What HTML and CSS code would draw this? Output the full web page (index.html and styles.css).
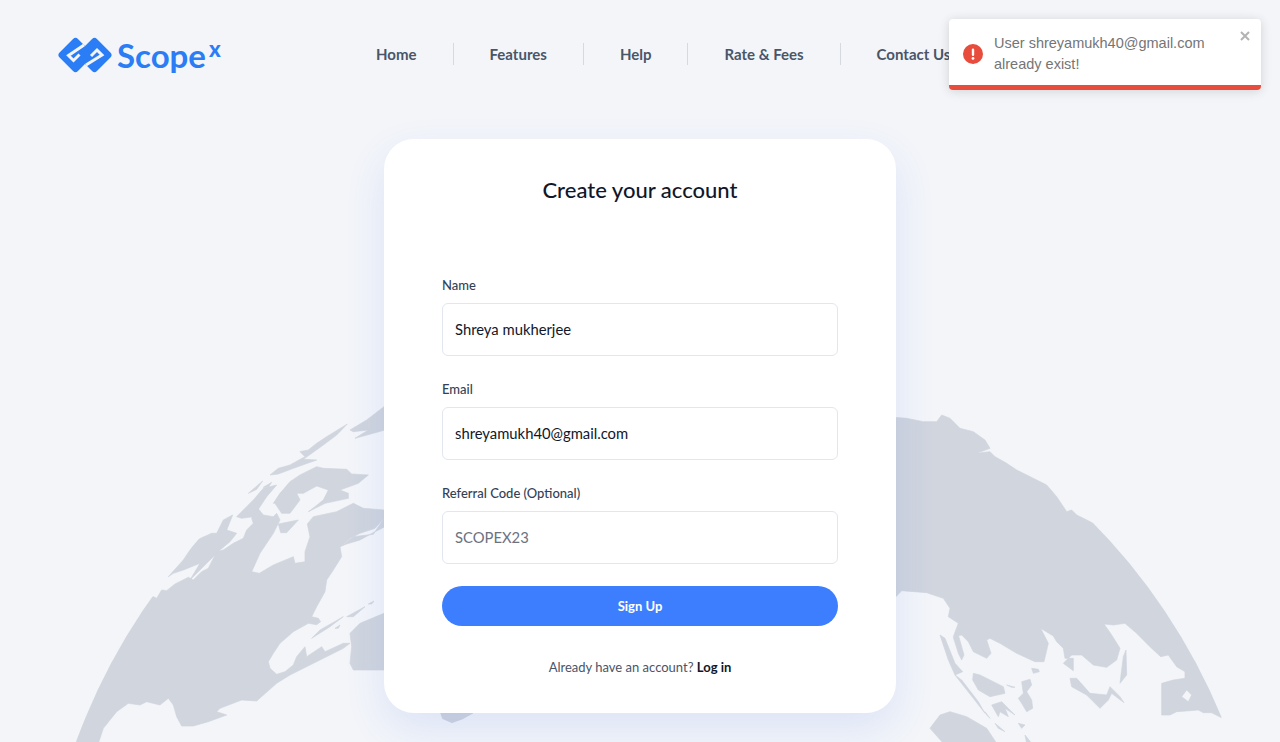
FILE: index.html
```html
<!DOCTYPE html>
<html lang="en">

<head>
    <meta charset="UTF-8">
    <meta name="viewport" content="width=device-width, initial-scale=1.0">
    <title>Create your account</title>
    <link rel="stylesheet" href="styles.css">
</head>

<body>
    <div class="page">
        <!-- Globe behind the card -->
        <svg class="globe" width="1280" height="742" viewBox="0 0 1280 742" aria-hidden="true">
            <defs>
                <clipPath id="globeClip">
                    <circle cx="653.6" cy="953" r="615"></circle>
                </clipPath>
            </defs>
            <g clip-path="url(#globeClip)" fill="#d0d5de" fill-rule="evenodd" stroke="#d0d5de" stroke-width="2" stroke-linejoin="round">
                <g transform="translate(60 400) scale(0.33333)">
                    <path d="M30 1030L200 600L280 590L290 595L305 570L320 572L345 552L385 532L400 540L425 515L445 505L470 455L490 450L520 430L550 415L560 390L580 370L575 355L590 320L610 345L640 350L650 340L660 360L640 400L600 460L575 515L598 520L640 495L700 470L705 490L735 485L735 455L750 410L742 372L760 350L830 335L880 310L910 325L972 330L1000 330L1000 350L972 355L945 385L900 400L870 415L840 440L845 470L820 510L800 540L795 575L770 620L755 650L775 655L782 665L770 674L745 670L700 695L660 730L640 760L625 785L630 805L650 823L675 815L700 795L710 770L735 740L740 770L785 740L795 755L850 730L870 730L850 745L810 765L750 795L690 825L650 850L590 903L545 900L480 925L470 935L500 945L445 965L400 978L365 978L350 950L340 915L325 895L300 915L260 905L240 915L205 910L170 935L130 985L115 1030Z"></path>
                    <path d="M870 700L900 670L972 640L1000 630L1000 810L880 810L870 790L875 740Z"></path>
                    <path d="M755 715L780 690L850 650L810 680Z"></path>
                    <path d="M860 650L915 620L880 650Z"></path>
                    <path d="M825 685L840 675L835 685Z"></path>
                    <path d="M925 612L942 603L935 612Z"></path>
                    <path d="M655 372L715 360L680 398L662 398Z"></path>
                    <path d="M840 440L880 410L940 403L972 355L975 380L945 395L900 420L860 432Z"></path>
                    <path d="M870 90L920 60L972 20L975 90L885 115L925 90L880 95Z"></path>
                    <path d="M862 72L800 110L770 130L745 150L720 155L735 170L690 195L655 205L630 225L655 222L700 205L770 180L730 178L790 135L830 105Z"></path>
                    <path d="M608 243L565 280L590 268Z"></path>
                    <path d="M610 262L635 247L625 262Z"></path>
                    <path d="M640 310L660 280L690 245L720 225L770 200L790 205L860 208L875 222L925 225L895 250L840 270L865 280L865 295L795 310L745 335L765 320L790 300L805 270L770 258L730 280L710 280L720 300L690 340L665 340L645 310Z"></path>
                    <path d="M530 350L560 320L580 300L610 265L650 255L620 290L600 320L580 350L545 355Z"></path>
                    <path d="M325 530L370 480L410 420L455 400L470 400L490 360L518 345L500 390L530 400L510 425L480 450L450 480L420 510L390 540L420 490L370 510L340 520Z"></path>
                </g>
                <g transform="translate(890 400) scale(0.33333)">
                    <path d="M-10 50L50 55L100 65L140 65L155 45L180 55L210 85L250 95L285 120L300 145L260 160L300 155L315 170L350 190L380 210L430 235L470 255L500 290L530 335L545 330L560 345L610 370L700 370L1050 950L992 952L965 938L940 938L925 930L900 932L860 935L840 945L815 945L815 850L850 840L885 835L885 815L860 800L835 765L812 770L780 740L740 700L705 670L670 675L642 672L665 705L690 745L680 780L650 802L610 795L575 765L545 765L520 790L550 812L550 775L525 775L520 745L500 725L490 708L452 685L475 730L462 785L435 785L380 760L330 730L300 715L290 720L303 760L290 775L250 755L235 725L215 705L190 710L205 670L175 650L180 625L160 595L110 578L35 572L18 590L-10 600Z M875 890L890 870L905 885L895 905Z"></path>
                    <path d="M150 705L165 715L195 790L218 815L195 825L175 780Z"></path>
                    <path d="M190 712L205 705L222 765L215 780L205 760Z"></path>
                    <path d="M195 825L215 840L265 905L285 940L250 895Z"></path>
                    <path d="M250 820L270 825L340 860L345 880L300 890L265 870L248 840Z"></path>
                    <path d="M350 855L375 862L365 862Z"></path>
                    <path d="M395 845L420 838L425 855L410 875L425 900L428 925L410 935L395 910L385 895L400 880Z"></path>
                    <path d="M425 805L445 808L448 815L430 820Z"></path>
                    <path d="M305 915L335 905L375 945L345 925L355 950L330 935L325 950Z"></path>
                    <path d="M285 935L300 955L290 945Z"></path>
                    <path d="M315 970L345 995L325 985Z"></path>
                    <path d="M385 970L405 975L395 985Z"></path>
                    <path d="M405 1005L425 1030L410 1030Z"></path>
                    <path d="M120 985L150 945L180 935L230 950L290 985L320 1030L160 1030Z"></path>
                    <path d="M540 835L560 835L600 880L650 885L660 860L690 890L702 908L665 880L655 900L630 925L590 885L545 860Z"></path>
                    <path d="M690 850L700 770L708 750L710 825Z"></path>
                </g>
                <path d="M437 700L475 700L472 713L463 718L452 722L443 718Z"></path>
            </g>
        </svg>

        <header class="site-header">
            <a class="logo" href="#">
                <svg class="logo-mark" width="56" height="38" viewBox="0 0 56 38" aria-hidden="true">
                    <rect x="5.5" y="6" width="26" height="26" rx="3.5" transform="rotate(45 18.5 19)" fill="#2a7df5"></rect>
                    <rect x="24.5" y="6" width="26" height="26" rx="3.5" transform="rotate(45 37.5 19)" fill="#2a7df5"></rect>
                    <path d="M27 9L11.5 19.5L16.5 24.5L22.5 18.5" fill="none" stroke="#f3f5f9" stroke-width="3"></path>
                    <path d="M29 29L45 19L40 14L34 20" fill="none" stroke="#f3f5f9" stroke-width="3"></path>
                </svg>
                <span class="logo-text">Scope</span>
                <span class="logo-sup">x</span>
            </a>
            <nav class="main-nav">
                <a href="#">Home</a>
                <a href="#">Features</a>
                <a href="#">Help</a>
                <a href="#">Rate &amp; Fees</a>
                <a href="#">Contact Us</a>
            </nav>
        </header>

        <main class="content">
            <form class="signup-card">
                <h1>Create your account</h1>
                <div class="field">
                    <label for="name">Name</label>
                    <input id="name" type="text" value="Shreya mukherjee">
                </div>
                <div class="field">
                    <label for="email">Email</label>
                    <input id="email" type="text" value="shreyamukh40@gmail.com">
                </div>
                <div class="field">
                    <label for="code">Referral Code (Optional)</label>
                    <input id="code" type="text" placeholder="SCOPEX23">
                </div>
                <button class="submit-button" type="button">Sign Up</button>
                <p class="login-note">Already have an account? <a href="#">Log in</a></p>
            </form>
        </main>

        <!-- Уведомление об ошибке -->
        <div class="toast">
            <svg class="toast-icon" width="20" height="20" viewBox="0 0 20 20" aria-hidden="true">
                <circle cx="10" cy="10" r="10" fill="#e74c3c"></circle>
                <rect x="8.8" y="4.5" width="2.4" height="7.5" rx="1.2" fill="#fff"></rect>
                <circle cx="10" cy="14.4" r="1.4" fill="#fff"></circle>
            </svg>
            <div class="toast-text">User shreyamukh40@gmail.com already exist!</div>
            <svg class="toast-close" width="10" height="10" viewBox="0 0 10 10" aria-hidden="true">
                <path d="M1 1L9 9M9 1L1 9" stroke="#b3b3b3" stroke-width="2"></path>
            </svg>
            <div class="toast-bar"></div>
        </div>
    </div>
</body>

</html>
```

FILE: styles.css
```css
* {
    box-sizing: border-box;
}

body {
    margin: 0;
    background-color: #f3f5f9;
    font-family: "Lato", "Liberation Sans", sans-serif;
    color: #0f172a;
}

.page {
    position: relative;
    height: 742px;
    overflow: hidden;
}

.globe {
    position: absolute;
    top: 0;
    left: 0;
}

/* Шапка */
.site-header {
    position: relative;
    display: flex;
    align-items: center;
    height: 110px;
    padding-left: 57px;
}

.logo {
    display: flex;
    align-items: center;
    width: 283px;
    color: #2a7df5;
    text-decoration: none;
}

.logo-mark {
    margin-right: 4px;
}

.logo-text {
    font-size: 33px;
    font-weight: 700;
    line-height: 40px;
}

.logo-sup {
    align-self: flex-start;
    margin: 3px 0 0 3px;
    font-size: 22px;
    font-weight: 900;
    line-height: 22px;
}

.main-nav {
    display: flex;
    align-items: center;
    margin-top: -2px;
}

.main-nav a {
    padding: 2px 36px;
    border-right: 1px solid #d5d9e0;
    color: #4a5568;
    font-size: 15px;
    font-weight: 700;
    line-height: 18px;
    text-decoration: none;
}

.main-nav a:last-child {
    border-right: none;
}

/* Форма */
.content {
    position: relative;
    display: flex;
    justify-content: center;
    padding-top: 29px;
}

.signup-card {
    width: 512px;
    padding: 37px 58px 37px;
    background-color: #fff;
    border-radius: 30px;
    box-shadow: 0 16px 40px rgba(61, 110, 230, 0.12);
}

.signup-card h1 {
    margin: 0 0 72px;
    font-size: 22px;
    font-weight: 500;
    line-height: 28px;
    text-align: center;
}

.field {
    margin-bottom: 24px;
}

.field label {
    display: block;
    margin-bottom: 9px;
    color: #334155;
    font-size: 13px;
    font-weight: 500;
    line-height: 18px;
}

.field input {
    display: block;
    width: 100%;
    height: 53px;
    padding: 0 12px 2px;
    border: 1px solid #e2e6ee;
    border-radius: 6px;
    background-color: #fff;
    color: #0f172a;
    font-family: inherit;
    font-size: 14.8px;
}

.field input::placeholder {
    color: #6b7280;
}

.submit-button {
    display: block;
    width: 100%;
    height: 40px;
    margin-top: -2px;
    border: none;
    border-radius: 20px;
    background-color: #3d7eff;
    color: #fff;
    font-family: inherit;
    font-size: 13px;
    font-weight: 700;
}

.login-note {
    margin: 32px 0 0;
    color: #475569;
    font-size: 13px;
    line-height: 18px;
    text-align: center;
}

.login-note a {
    color: #0f172a;
    font-weight: 700;
    text-decoration: none;
}

/* Уведомление */
.toast {
    position: absolute;
    top: 19px;
    right: 19px;
    display: flex;
    width: 312px;
    height: 71px;
    padding: 14px 50px 0 14px;
    background-color: #fff;
    border-radius: 4px;
    box-shadow: 0 1px 10px rgba(0, 0, 0, 0.1), 0 2px 15px rgba(0, 0, 0, 0.05);
    overflow: hidden;
}

.toast-icon {
    flex-shrink: 0;
    margin: 11px 11px 0 0;
}

.toast-text {
    color: #757575;
    font-family: "Liberation Sans", Arial, sans-serif;
    font-size: 14.5px;
    line-height: 21px;
}

.toast-close {
    position: absolute;
    top: 12px;
    right: 11px;
}

.toast-bar {
    position: absolute;
    left: 0;
    right: 0;
    bottom: 0;
    height: 5px;
    background-color: #e74c3c;
}
```
